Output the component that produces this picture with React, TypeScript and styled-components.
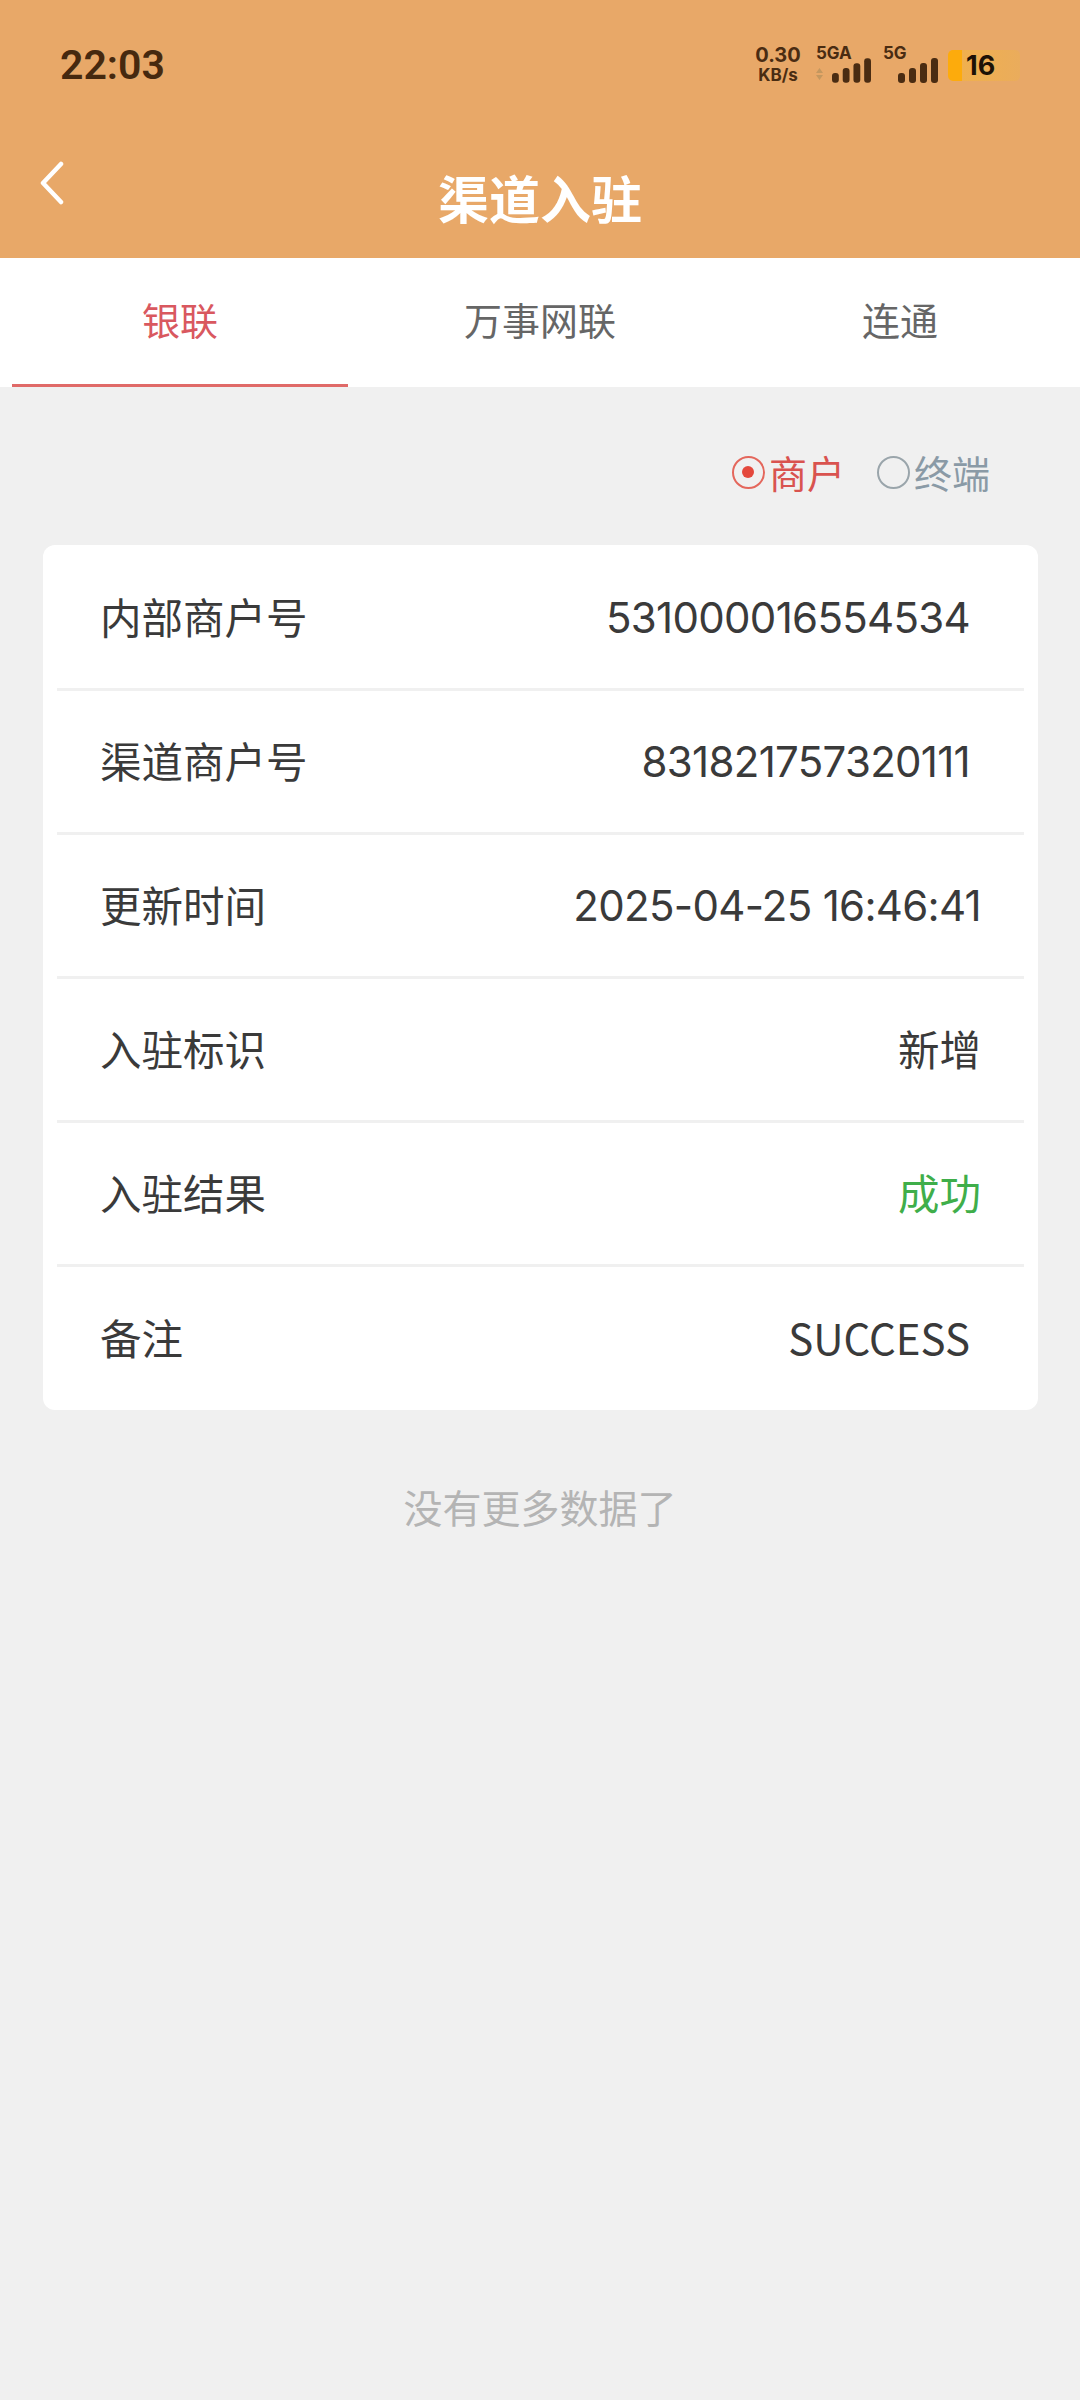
import styled, { createGlobalStyle } from "styled-components";

const rows = [
  { label: "内部商户号", value: "531000016554534", inset: true, digits: true },
  { label: "渠道商户号", value: "831821757320111", inset: true, digits: true },
  { label: "更新时间", value: "2025-04-25 16:46:41", digits: true },
  { label: "入驻标识", value: "新增" },
  { label: "入驻结果", value: "成功", success: true },
  { label: "备注", value: "SUCCESS", inset: true, plain: true },
];

const tabs = ["银联", "万事网联", "连通"];

function Signal() {
  return (
    <svg width="40" height="25" viewBox="0 0 40 25">
      <rect x="0" y="15" width="7" height="10" rx="3" fill="#4a2c12" />
      <rect x="11" y="10" width="7" height="15" rx="3" fill="#4a2c12" />
      <rect x="22" y="5" width="7" height="20" rx="3" fill="#4a2c12" />
      <rect x="33" y="0" width="7" height="25" rx="3" fill="#4a2c12" />
    </svg>
  );
}

export default function App() {
  return (
    <Page>
      <GlobalStyle />
      <Header>
        <StatusBar>
          <Clock>22:03</Clock>
          <StatusIcons>
            <Speed>
              <span>0.30</span>
              <small>KB/s</small>
            </Speed>
            <Network>
              <NetName>5GA</NetName>
              <NetBars>
                <Arrows>
                  <svg width="7" height="12" viewBox="0 0 7 12">
                    <path d="M3.5 0 L7 5 H0 Z M3.5 12 L0 7 H7 Z" fill="#c4975f" />
                  </svg>
                </Arrows>
                <Signal />
              </NetBars>
            </Network>
            <Network>
              <NetName>5G</NetName>
              <NetBars>
                <Signal />
              </NetBars>
            </Network>
            <Battery>16</Battery>
          </StatusIcons>
        </StatusBar>
        <NavBar>
          <BackButton>
            <svg width="26" height="44" viewBox="0 0 26 44">
              <path d="M22 3 L4 22 L22 41" fill="none" stroke="#fff" strokeWidth="4.5" strokeLinecap="round" strokeLinejoin="round" />
            </svg>
          </BackButton>
          <Title>渠道入驻</Title>
        </NavBar>
      </Header>
      <Tabs>
        {tabs.map((t, i) => (
          <Tab key={t} $active={i === 0}>{t}</Tab>
        ))}
      </Tabs>
      <RadioRow>
        <Radio $checked>
          <RadioDot $checked />
          商户
        </Radio>
        <Radio>
          <RadioDot />
          终端
        </Radio>
      </RadioRow>
      <Card>
        {rows.map((r) => (
          <Row key={r.label}>
            <Label>{r.label}</Label>
            <Value $inset={r.inset} $success={r.success} $plain={r.plain} $digits={r.digits}>{r.value}</Value>
          </Row>
        ))}
      </Card>
      <NoMore>没有更多数据了</NoMore>
    </Page>
  );
}

const GlobalStyle = createGlobalStyle`
  html, body {
    margin: 0;
    padding: 0;
    background: #f0f0f0;
  }
  * {
    box-sizing: border-box;
  }
`;

const Page = styled.div`
  width: 1080px;
  height: 2400px;
  overflow: hidden;
  background: #f0f0f0;
  font-family: Inter, "Noto Sans CJK SC", sans-serif;
`;

const Header = styled.header`
  height: 258px;
  background: #e8a868;
  display: flex;
  flex-direction: column;
`;

const StatusBar = styled.div`
  height: 130px;
  padding: 0 60px;
  display: flex;
  align-items: center;
  justify-content: space-between;
`;

const Clock = styled.div`
  font-family: Roboto, sans-serif;
  font-size: 41px;
  font-weight: 600;
  color: #46290f;
`;

const StatusIcons = styled.div`
  display: flex;
  align-items: center;
  gap: 12px;
  color: #4a2c12;
  font-weight: 700;
`;

const Speed = styled.div`
  width: 46px;
  margin-right: 3px;
  display: flex;
  flex-direction: column;
  align-items: center;
  white-space: nowrap;
  line-height: 20px;
  font-size: 20px;

  small {
    font-size: 17px;
  }
`;

const Network = styled.div`
  width: 55px;
  height: 36px;
  display: flex;
  flex-direction: column;
`;

const NetName = styled.span`
  font-size: 17px;
  line-height: 13px;
  height: 13px;
`;

const NetBars = styled.div`
  display: flex;
  align-items: flex-end;
  justify-content: flex-end;
  gap: 6px;
  height: 23px;

  svg {
    display: block;
  }
`;

const Arrows = styled.span`
  display: block;
  margin: 0 3px 3px 0;
`;

const Battery = styled.div`
  width: 72px;
  height: 31px;
  margin-left: -2px;
  border-radius: 5px;
  background: linear-gradient(90deg, #fdab0c 0 14px, #f0b04e 14px, #eaac5c 100%);
  color: #1d1206;
  font-size: 27px;
  line-height: 31px;
  padding-left: 18px;
`;

const NavBar = styled.div`
  flex: 1;
  position: relative;
  display: flex;
  align-items: center;
  justify-content: center;
`;

const BackButton = styled.div`
  position: absolute;
  left: 39px;
  top: 31px;
  line-height: 0;
`;

const Title = styled.h1`
  margin: 0;
  font-size: 51px;
  font-weight: 700;
  color: #fff;
  position: relative;
  top: 3px;
`;

const Tabs = styled.nav`
  height: 129px;
  background: #fff;
  display: flex;
`;

const Tab = styled.div<{ $active?: boolean }>`
  position: relative;
  flex: 1;
  display: flex;
  align-items: center;
  justify-content: center;
  font-size: 38px;
  color: ${(p) => (p.$active ? "#d9585f" : "#666")};
  padding-bottom: 9px;

  &::after {
    content: "";
    display: ${(p) => (p.$active ? "block" : "none")};
    position: absolute;
    left: 12px;
    right: 12px;
    bottom: 0;
    height: 3px;
    background: #e06a68;
  }
`;

const RadioRow = styled.div`
  height: 158px;
  padding: 10px 90px 0 0;
  display: flex;
  justify-content: flex-end;
  align-items: center;
  gap: 32px;
`;

const Radio = styled.div<{ $checked?: boolean }>`
  display: flex;
  align-items: center;
  font-size: 38px;
  color: ${(p) => (p.$checked ? "#d9534f" : "#8a9aa6")};
`;

const RadioDot = styled.span<{ $checked?: boolean }>`
  width: 33px;
  height: 33px;
  border-radius: 50%;
  border: 2px solid ${(p) => (p.$checked ? "#e4675c" : "#9aa5ab")};
  margin: 2px 4px 0 0;
  display: flex;
  align-items: center;
  justify-content: center;

  &::after {
    content: "";
    display: ${(p) => (p.$checked ? "block" : "none")};
    width: 12px;
    height: 12px;
    border-radius: 50%;
    background: #e4483c;
  }
`;

const Card = styled.section`
  width: 995px;
  margin-left: 43px;
  padding: 2px 14px 0;
  background: #fff;
  border-radius: 12px;
`;

const Row = styled.div`
  height: 144px;
  display: flex;
  align-items: center;
  justify-content: space-between;
  padding: 0 43px 4px;
  border-bottom: 3px solid #f0f0f0;

  &:last-child {
    height: 143px;
    border-bottom: none;
  }
`;

const Label = styled.span`
  font-size: 41.5px;
  color: #3a3a3a;
`;

const Value = styled.span<{ $inset?: boolean; $success?: boolean; $plain?: boolean; $digits?: boolean }>`
  font-family: ${(p) => (p.$plain ? '"Noto Sans CJK SC", sans-serif' : "Inter, 'Noto Sans CJK SC', sans-serif")};
  font-size: ${(p) => (p.$digits || p.$plain ? "42px" : "41.5px")};
  letter-spacing: ${(p) => (p.$digits ? "-0.7px" : "0")};
  padding-top: ${(p) => (p.$digits ? "3px" : "0")};
  color: ${(p) => (p.$success ? "#3fae4a" : "#3a3a3a")};
  margin-right: ${(p) => (p.$inset ? "11px" : "0")};
`;

const NoMore = styled.div`
  margin-top: 68px;
  text-align: center;
  font-size: 39px;
  color: #b4b4b4;
`;
